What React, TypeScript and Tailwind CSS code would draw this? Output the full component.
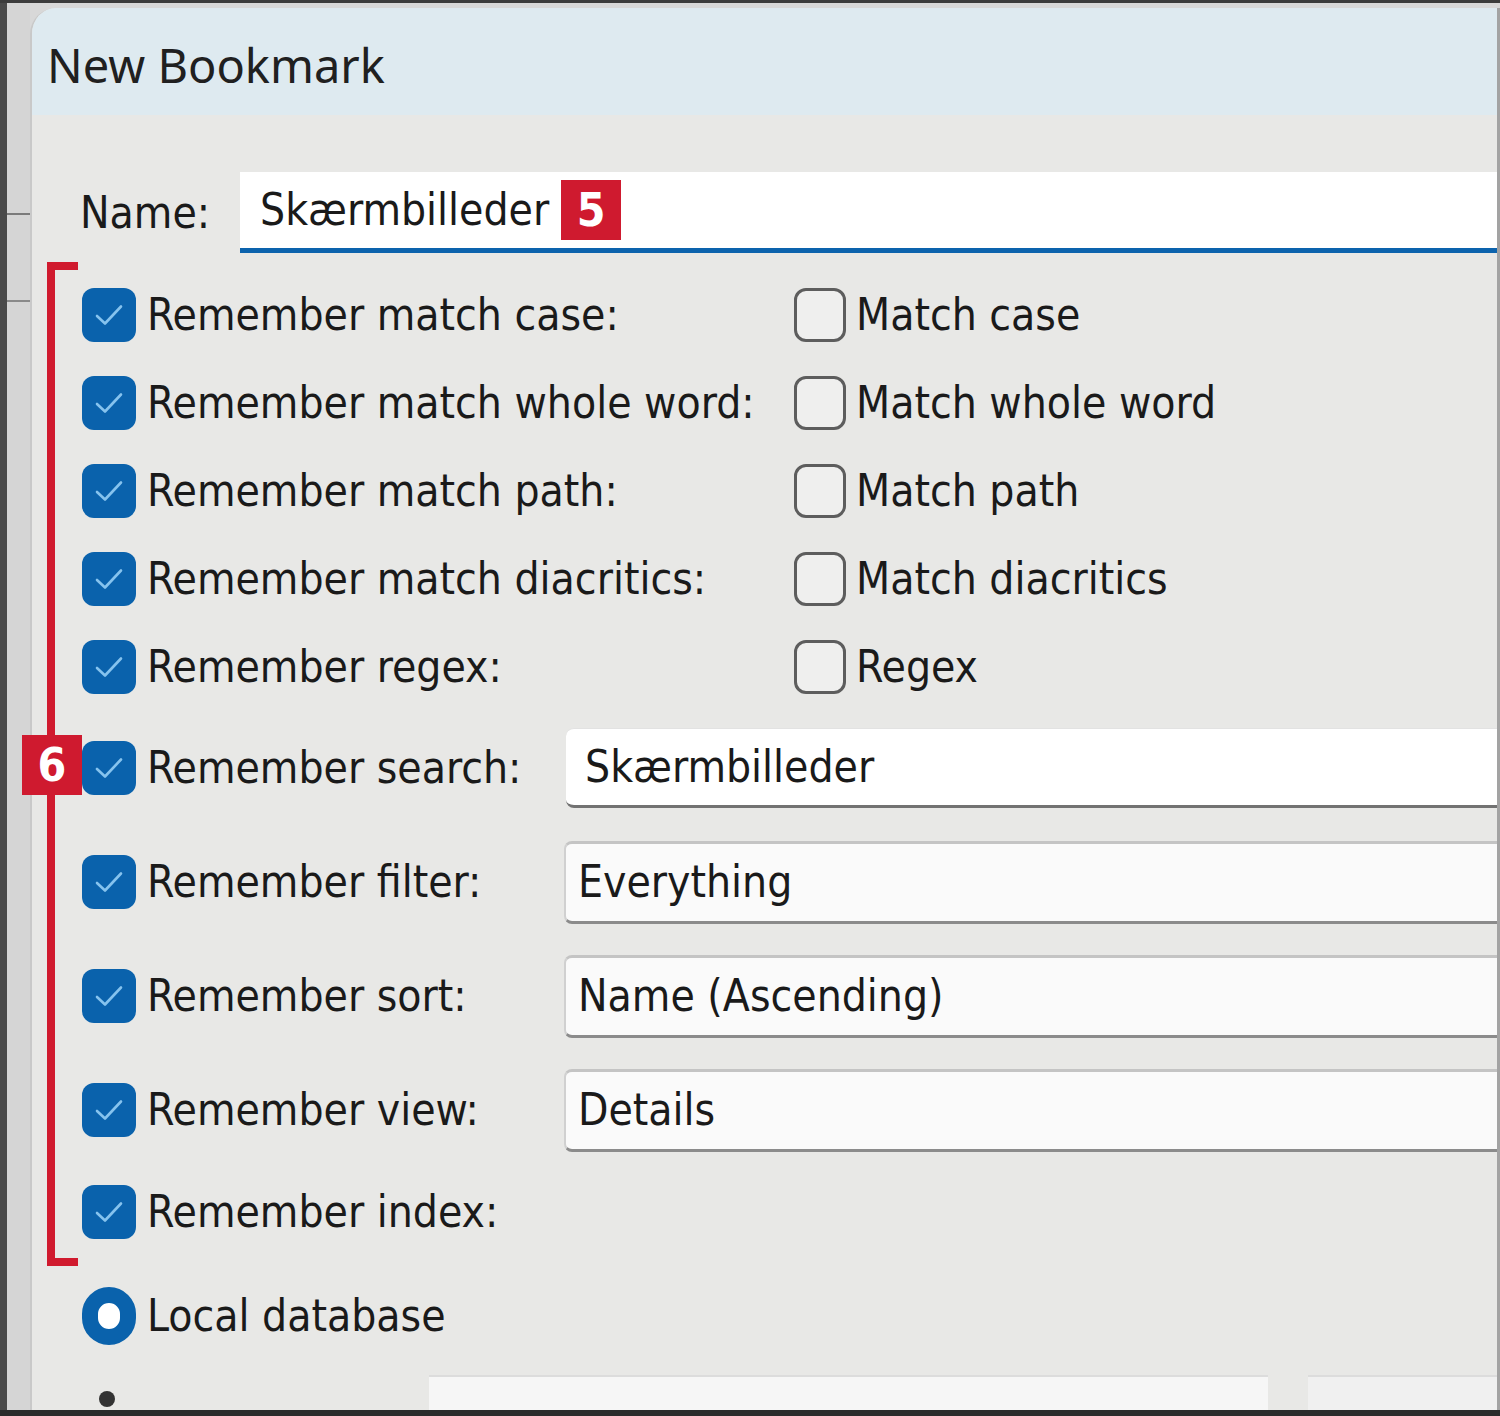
import React from 'react';

const uiFont = { fontFamily: '"DejaVu Sans Condensed", "DejaVu Sans", Tahoma, sans-serif', fontStretch: 'condensed' as const };

const matchRows = [
  { remember: 'Remember match case:', option: 'Match case' },
  { remember: 'Remember match whole word:', option: 'Match whole word' },
  { remember: 'Remember match path:', option: 'Match path' },
  { remember: 'Remember match diacritics:', option: 'Match diacritics' },
  { remember: 'Remember regex:', option: 'Regex' },
];

const comboRows = [
  { label: 'Remember filter:', value: 'Everything' },
  { label: 'Remember sort:', value: 'Name (Ascending)' },
  { label: 'Remember view:', value: 'Details' },
];

const Checked = () => (
  <div className="w-[54px] h-[54px] shrink-0 rounded-[12px] bg-[#0a62ac] flex items-center justify-center">
    <svg width="54" height="54" viewBox="0 0 54 54">
      <path d="M15 28 L23 35.5 L39 18.5" fill="none" stroke="#86c3ee" strokeWidth="2.6" strokeLinecap="round" strokeLinejoin="round" />
    </svg>
  </div>
);

const Unchecked = () => (
  <div className="w-[52px] h-[54px] shrink-0 rounded-[12px] border-[3px] border-[#5d5d5d] bg-[#efefee]" />
);

const Badge = ({ n }: { n: string }) => (
  <div className="w-[60px] h-[60px] bg-[#cf1a2f] flex items-center justify-center text-white font-bold text-[46px] leading-none" style={{ fontFamily: '"DejaVu Sans", sans-serif' }}>
    {n}
  </div>
);

export default function App() {
  return (
    <div className="w-[1500px] h-[1416px] overflow-hidden relative flex bg-[#d8d8d8] border-t-[3px] border-[#3c3c3c] text-[#1a1a1a]" style={uiFont}>
      {/* window behind the dialog */}
      <div className="w-[30px] shrink-0 flex">
        <div className="w-[7px] bg-[#4a4a4a]" />
        <div className="flex-1 bg-[#d5d5d5] flex flex-col">
          <div className="h-[210px]" />
          <div className="h-[2px] bg-[#7b7b7b]" />
          <div className="h-[85px]" />
          <div className="h-[2px] bg-[#8a8a8a]" />
        </div>
      </div>

      {/* dialog */}
      <div className="flex-1 mt-[5px] flex flex-col rounded-tl-[26px] bg-[#e8e8e6] border-l-2 border-[#c9c9c9] border-r-[3px] border-r-[#a3a3a3] overflow-hidden">
        <div className="h-[107px] shrink-0 bg-[#deeaf0] flex items-center pl-[15px] pt-[8px]">
          <span className="text-[47px] text-[#202020]" style={{ fontFamily: '"Noto Sans", "Open Sans", sans-serif' }}>New Bookmark</span>
        </div>

        {/* name */}
        <div className="mt-[57px] h-[81px] flex items-stretch">
          <div className="w-[208px] pl-[48px] flex items-center text-[44px]">Name:</div>
          <div className="flex-1 bg-white border-b-[5px] border-[#0c63ad] flex items-center pl-[20px] text-[44px]">
            <span>Skærmbilleder</span>
            <div className="ml-[12px]"><Badge n="5" /></div>
          </div>
        </div>

        {/* options */}
        <div className="mt-[18px] pl-[50px] flex flex-col">
          {matchRows.map((r) => (
            <div key={r.option} className="h-[88px] flex items-center">
              <div className="w-[712px] flex items-center gap-[11px]">
                <Checked />
                <span className="text-[44px] whitespace-nowrap">{r.remember}</span>
              </div>
              <div className="flex items-center gap-[10px]">
                <Unchecked />
                <span className="text-[44px] whitespace-nowrap">{r.option}</span>
              </div>
            </div>
          ))}

          <div className="h-[114px] flex items-center">
            <div className="w-[484px] shrink-0 flex items-center gap-[11px]">
              <Checked />
              <span className="text-[44px] whitespace-nowrap">Remember search:</span>
            </div>
            <div className="flex-1 h-[80px] bg-white rounded-l-[8px] border-t border-[#e2e2e2] border-b-[3px] border-b-[#727272] flex items-center pl-[19px] text-[44px]">
              Skærmbilleder
            </div>
          </div>

          {comboRows.map((r) => (
            <div key={r.label} className="h-[114px] flex items-center">
              <div className="w-[482px] shrink-0 flex items-center gap-[11px]">
                <Checked />
                <span className="text-[44px] whitespace-nowrap">{r.label}</span>
              </div>
              <div className="flex-1 h-[83px] bg-[#fafafa] rounded-l-[8px] border-t-[3px] border-[#c4c4c4] border-b-[3px] border-b-[#8b8b8b] border-l-2 border-l-[#d0d0d0] flex items-center pl-[12px] text-[44px]">
                {r.value}
              </div>
            </div>
          ))}

          <div className="h-[90px] flex items-center gap-[11px]">
            <Checked />
            <span className="text-[44px] whitespace-nowrap">Remember index:</span>
          </div>

          <div className="h-[118px] flex items-center gap-[11px]">
            <div className="w-[54px] h-[58px] rounded-full border-[16px] border-[#0a62ac] bg-white" />
            <span className="text-[44px] whitespace-nowrap">Local database</span>
          </div>

          <div className="flex items-start">
            <div className="w-[54px] flex justify-center pt-[16px]">
              <div className="w-[16px] h-[16px] rounded-full bg-[#333]" />
            </div>
            <div className="ml-[296px] w-[890px] h-[40px] bg-[#f6f6f6] border-t-2 border-[#dcdcdc]" />
            <div className="ml-[40px] w-[200px] h-[40px] bg-[#f0f0f0] border-t-2 border-[#dcdcdc]" />
          </div>
        </div>
      </div>

      {/* bottom edge */}
      <div className="absolute left-0 right-0 bottom-0 h-[6px] bg-[#2a2a2a]" />

      {/* annotation bracket */}
      <div className="absolute left-[47px] top-[259px] w-[31px] h-[1004px] border-l-[8px] border-t-[8px] border-b-[8px] border-[#d01a2e]" />
      <div className="absolute left-[22px] top-[732px]">
        <Badge n="6" />
      </div>
    </div>
  );
}
